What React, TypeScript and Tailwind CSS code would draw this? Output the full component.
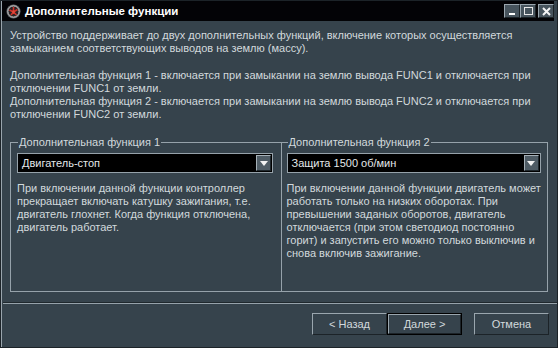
import React from "react";

const lineColor = "border-[#96a2aa]";

function TitleIcon() {
    return (
        <svg width="15" height="15" viewBox="0 0 15 15">
            <circle cx="7.5" cy="7.5" r="7" fill="#6b6f72" />
            <circle cx="7.5" cy="7.5" r="5.6" fill="#2a2224" stroke="#c9c9c9" strokeWidth="1" />
            <path d="M3.5 6 L7.5 8 L11.5 5.5 M5 11 L7.5 8 L10.5 11 M7.5 3 L7.5 8" stroke="#d0332b" strokeWidth="1.6" fill="none" />
            <circle cx="7.5" cy="8" r="1.4" fill="#e04a3a" />
        </svg>
    );
}

function WinButton({ children }: { children: React.ReactNode }) {
    return (
        <div className="w-[16px] h-[14px] bg-[#47545d] border border-t-[#9aa6ae] border-l-[#9aa6ae] border-b-[#1b2226] border-r-[#1b2226] flex items-center justify-center">
            {children}
        </div>
    );
}

function Select({ value, width }: { value: string; width: string }) {
    return (
        <div className={`${width} h-[20px] border ${lineColor} bg-black flex items-center justify-between`}>
            <span className="pl-[4px] text-[#e4e8ea]">{value}</span>
            <div className="w-[15px] h-[16px] mr-[1px] bg-[#4f5c65] border border-t-[#a5b0b7] border-l-[#a5b0b7] border-b-[#1f272c] border-r-[#1f272c] flex items-center justify-center">
                <svg width="8" height="5" viewBox="0 0 8 5">
                    <path d="M0 0 H8 L4 5 Z" fill="#f2f2f2" />
                </svg>
            </div>
        </div>
    );
}

export default function App() {
    return (
        <div className="w-[558px] h-[348px] bg-[#36434c] border border-[#1c2328] shadow-[inset_1px_0_0_#9aa5ad] flex flex-col font-['Liberation_Sans',sans-serif] text-[11px] leading-[13px] text-[#d2d9dc]">
            <div className="h-[20px] ml-[1px] mr-[3px] bg-[#030306] flex items-center pl-[4px]">
                <TitleIcon />
                <span className="ml-[4px] font-bold text-[11.5px] text-white">Дополнительные функции</span>
                <div className="ml-auto flex items-center">
                    <WinButton>
                        <div className="w-[6px] h-[2px] bg-white mt-[6px]" />
                    </WinButton>
                    <WinButton>
                        <div className="w-[9px] h-[8px] border border-[#e8e8e8]" />
                    </WinButton>
                    <div className="w-[2px]" />
                    <WinButton>
                        <svg width="9" height="9" viewBox="0 0 9 9">
                            <path d="M1 1 L8 8 M8 1 L1 8" stroke="#f4f4f4" strokeWidth="2" />
                        </svg>
                    </WinButton>
                </div>
            </div>

            <div className="px-[9px] pt-[8px] whitespace-nowrap">
                <div>Устройство поддерживает до двух дополнительных функций, включение которых осуществляется</div>
                <div>замыканием соответствующих выводов на землю (массу).</div>
                <div className="mt-[14px]">Дополнительная функция 1 - включается при замыкании на землю вывода FUNC1 и отключается при</div>
                <div>отключении FUNC1 от земли.</div>
                <div>Дополнительная функция 2 - включается при замыкании на землю вывода FUNC2 и отключается при</div>
                <div>отключении FUNC2 от земли.</div>

                <div className="mt-[15px] flex">
                    <fieldset className={`w-[271px] h-[156px] border border-r-0 ${lineColor}`}>
                        <legend className="ml-[7px] px-[1px]">Дополнительная функция 1</legend>
                        <div className="mt-[4px] ml-[6px]">
                            <Select value="Двигатель-стоп" width="w-[256px]" />
                        </div>
                        <div className="mt-[9px] ml-[6px]">
                            <div>При включении данной функции контроллер</div>
                            <div>прекращает включать катушку зажигания, т.е.</div>
                            <div>двигатель глохнет. Когда функция отключена,</div>
                            <div>двигатель работает.</div>
                        </div>
                    </fieldset>
                    <fieldset className={`w-[268px] h-[156px] border ${lineColor}`}>
                        <legend className="ml-[6px] px-[1px]">Дополнительная функция 2</legend>
                        <div className="mt-[4px] ml-[5px]">
                            <Select value="Защита 1500 об/мин" width="w-[254px]" />
                        </div>
                        <div className="mt-[9px] ml-[5px]">
                            <div>При включении данной функции двигатель может</div>
                            <div>работать только на низких оборотах. При</div>
                            <div>превышении заданых оборотов, двигатель</div>
                            <div>отключается (при этом светодиод постоянно</div>
                            <div>горит) и запустить его можно только выключив и</div>
                            <div>снова включив зажигание.</div>
                        </div>
                    </fieldset>
                </div>
            </div>

            <div className="mt-[10px] ml-[2px] border-t border-[#1f282d] border-b border-b-[#96a2aa]" />

            <div className="mt-[9px] flex justify-end pr-[8px] text-[11px]">
                <button className="w-[75px] h-[22px] border border-t-[#9aa6ae] border-l-[#9aa6ae] border-b-[#1c2328] border-r-[#1c2328] text-[#d2d9dc]">
                    &lt; Назад
                </button>
                <button className="w-[75px] h-[22px] border border-black text-[#d2d9dc]">
                    <div className="h-full border border-t-[#9aa6ae] border-l-[#9aa6ae] border-b-[#1c2328] border-r-[#1c2328] flex items-center justify-center">
                        Далее &gt;
                    </div>
                </button>
                <button className="ml-[12px] w-[75px] h-[22px] border border-t-[#9aa6ae] border-l-[#9aa6ae] border-b-[#1c2328] border-r-[#1c2328] text-[#d2d9dc]">
                    Отмена
                </button>
            </div>
        </div>
    );
}
